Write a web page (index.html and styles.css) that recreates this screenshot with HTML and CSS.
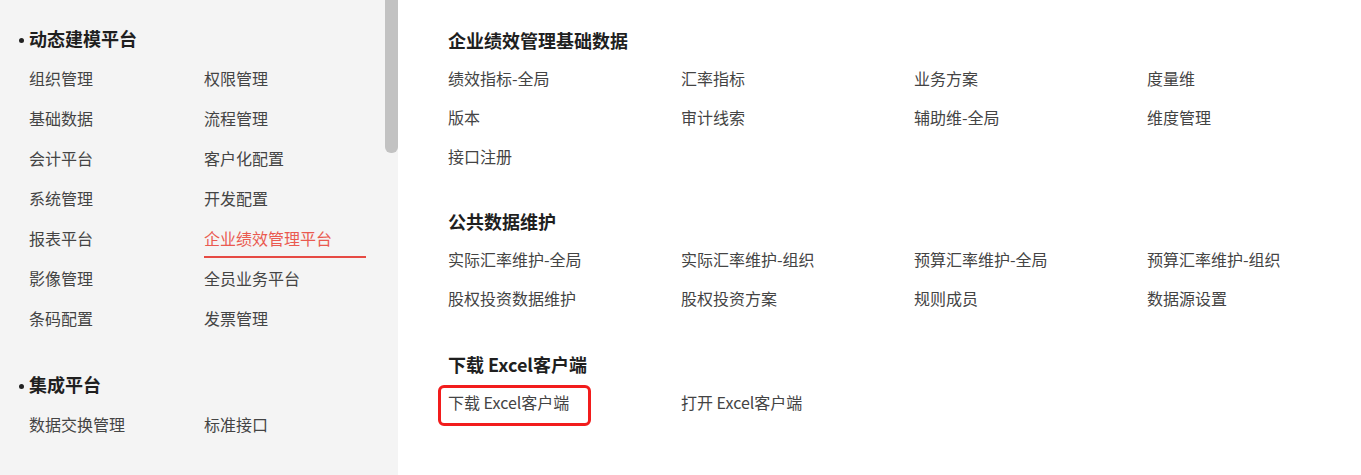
FILE: index.html
```html
<!DOCTYPE html>
<html lang="zh-CN">
<head>
    <meta charset="UTF-8">
    <meta name="viewport" content="width=device-width, initial-scale=1.0">
    <title>平台菜单</title>
    <link rel="stylesheet" href="styles.css">
</head>
<body>
    <div class="page">
        <!-- 左侧平台列表 -->
        <div class="sidebar">
            <div class="sidebar-content">
                <h3 class="group-title">动态建模平台</h3>
                <div class="side-grid">
                    <a class="side-item">组织管理</a>
                    <a class="side-item">权限管理</a>
                    <a class="side-item">基础数据</a>
                    <a class="side-item">流程管理</a>
                    <a class="side-item">会计平台</a>
                    <a class="side-item">客户化配置</a>
                    <a class="side-item">系统管理</a>
                    <a class="side-item">开发配置</a>
                    <a class="side-item">报表平台</a>
                    <a class="side-item active">企业绩效管理平台</a>
                    <a class="side-item">影像管理</a>
                    <a class="side-item">全员业务平台</a>
                    <a class="side-item">条码配置</a>
                    <a class="side-item">发票管理</a>
                </div>

                <h3 class="group-title second">集成平台</h3>
                <div class="side-grid">
                    <a class="side-item">数据交换管理</a>
                    <a class="side-item">标准接口</a>
                </div>
            </div>
            <div class="scroll-track">
                <div class="scroll-thumb"></div>
            </div>
        </div>

        <!-- 右侧功能节点 -->
        <div class="main">
            <h3 class="section-title">企业绩效管理基础数据</h3>
            <div class="node-grid">
                <a class="node">绩效指标-全局</a>
                <a class="node">汇率指标</a>
                <a class="node">业务方案</a>
                <a class="node">度量维</a>
                <a class="node">版本</a>
                <a class="node">审计线索</a>
                <a class="node">辅助维-全局</a>
                <a class="node">维度管理</a>
                <a class="node">接口注册</a>
            </div>

            <h3 class="section-title sec-2">公共数据维护</h3>
            <div class="node-grid">
                <a class="node">实际汇率维护-全局</a>
                <a class="node">实际汇率维护-组织</a>
                <a class="node">预算汇率维护-全局</a>
                <a class="node">预算汇率维护-组织</a>
                <a class="node">股权投资数据维护</a>
                <a class="node">股权投资方案</a>
                <a class="node">规则成员</a>
                <a class="node">数据源设置</a>
            </div>

            <h3 class="section-title sec-3">下载 Excel客户端</h3>
            <div class="node-grid">
                <a class="node marked">下载 Excel客户端</a>
                <a class="node">打开 Excel客户端</a>
            </div>
        </div>
    </div>
</body>
</html>
```

FILE: styles.css
```css
body {
    margin: 0;
    font-family: "Noto Sans CJK SC", "Liberation Sans", sans-serif;
    background-color: #fff;
}

.page {
    display: flex;
    height: 475px;
    overflow: hidden;
}

/* 左侧 */
.sidebar {
    flex: none;
    width: 398px;
    display: flex;
    background-color: #f4f4f4;
}

.sidebar-content {
    flex: 1;
    padding: 18px 0 0 29px;
}

.group-title {
    position: relative;
    margin: 0;
    height: 40px;
    line-height: 40px;
    font-size: 18px;
    font-weight: bold;
    color: #1f1f1f;
}

.group-title::before {
    content: "";
    position: absolute;
    left: -10px;
    top: 20px;
    width: 5px;
    height: 5px;
    border-radius: 50%;
    background-color: #222;
}

.group-title.second {
    margin-top: 26px;
}

.side-grid {
    display: grid;
    grid-template-columns: 175px 162px;
    grid-auto-rows: 40px;
}

.side-item {
    display: block;
    line-height: 40px;
    font-size: 16px;
    color: #444;
    cursor: pointer;
}

.side-item.active {
    color: #ea5a50;
    box-shadow: inset 0 -2px 0 #e64a43;
}

.scroll-track {
    width: 13px;
    background-color: #f4f4f4;
}

.scroll-thumb {
    height: 153px;
    background-color: #c2c2c2;
    border-radius: 0 0 6px 6px;
}

/* 右侧 */
.main {
    flex: 1;
    min-width: 0;
    padding: 21px 0 0 50px;
}

.section-title {
    margin: 0;
    height: 38px;
    line-height: 38px;
    font-size: 18px;
    font-weight: bold;
    color: #1f1f1f;
}

.section-title.sec-2 {
    margin-top: 26px;
}

.section-title.sec-3 {
    margin-top: 27px;
}

.node-grid {
    display: grid;
    grid-template-columns: repeat(4, 233px);
    grid-auto-rows: 39px;
}

.node {
    display: block;
    line-height: 39px;
    font-size: 16px;
    color: #444;
    cursor: pointer;
}

/* 红色标注框 */
.node.marked {
    position: relative;
}

.node.marked::after {
    content: "";
    position: absolute;
    left: -10px;
    top: 2px;
    width: 153px;
    height: 41px;
    box-sizing: border-box;
    border: 3px solid #f21c1c;
    border-radius: 6px;
}
```
